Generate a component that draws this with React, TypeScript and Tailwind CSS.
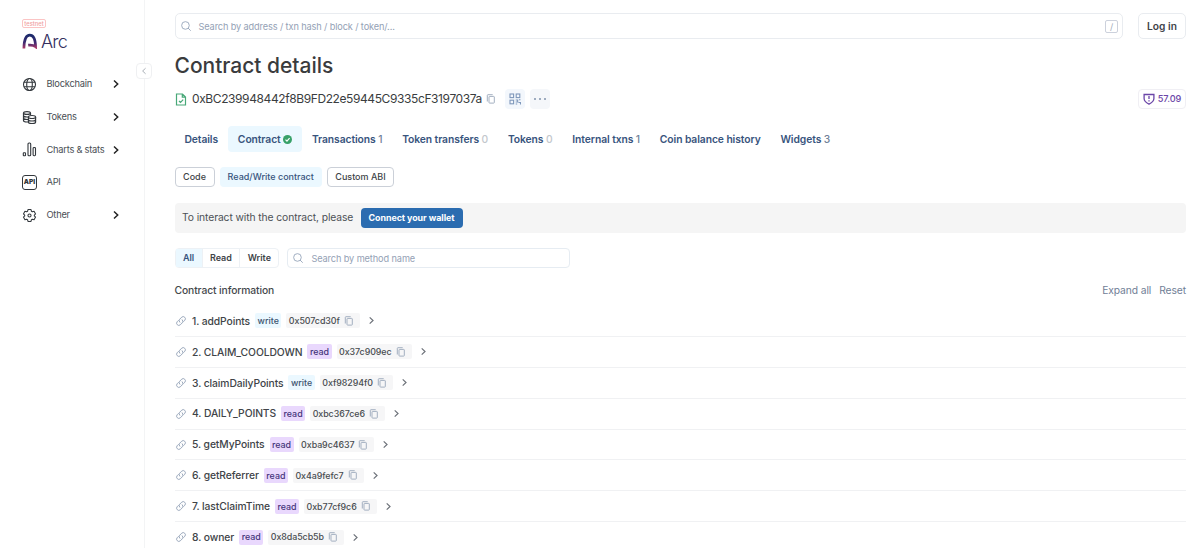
import React, { useState } from 'react';
import { clsx } from 'clsx';

type Method = { name: string; kind: 'read' | 'write'; selector: string };

const METHODS: Method[] = [
  { name: 'addPoints', kind: 'write', selector: '0x507cd30f' },
  { name: 'CLAIM_COOLDOWN', kind: 'read', selector: '0x37c909ec' },
  { name: 'claimDailyPoints', kind: 'write', selector: '0xf98294f0' },
  { name: 'DAILY_POINTS', kind: 'read', selector: '0xbc367ce6' },
  { name: 'getMyPoints', kind: 'read', selector: '0xba9c4637' },
  { name: 'getReferrer', kind: 'read', selector: '0x4a9fefc7' },
  { name: 'lastClaimTime', kind: 'read', selector: '0xb77cf9c6' },
  { name: 'owner', kind: 'read', selector: '0x8da5cb5b' },
];

const TABS: { label: string; count?: number; verified?: boolean }[] = [
  { label: 'Details' },
  { label: 'Contract', verified: true },
  { label: 'Transactions', count: 1 },
  { label: 'Token transfers', count: 0 },
  { label: 'Tokens', count: 0 },
  { label: 'Internal txns', count: 1 },
  { label: 'Coin balance history' },
  { label: 'Widgets', count: 3 },
];

const NAV = [
  { label: 'Blockchain', icon: GlobeIcon, more: true },
  { label: 'Tokens', icon: CoinsIcon, more: true },
  { label: 'Charts & stats', icon: StatsIcon, more: true },
  { label: 'API', icon: ApiIcon, more: false },
  { label: 'Other', icon: GearIcon, more: true },
];

function GlobeIcon() {
  return (
    <svg className="h-[15px] w-[15px]" viewBox="0 0 15 15" fill="none" stroke="currentColor" strokeWidth="1.1">
      <circle cx="7.5" cy="7.5" r="6" />
      <ellipse cx="7.5" cy="7.5" rx="2.8" ry="6" />
      <path d="M2 5.2h11M2 9.8h11" />
    </svg>
  );
}

function CoinsIcon() {
  return (
    <svg className="h-[15px] w-[15px]" viewBox="0 0 15 15" fill="none" stroke="currentColor" strokeWidth="1.2">
      <ellipse cx="5" cy="3" rx="3.5" ry="1.4" />
      <path d="M1.5 3v7.5c0 .8 1.5 1.500 3.500 1.500h1M8.500 3v2.300M1.500 5.600c0 .8 1.500 1.400 3.500 1.400h1M1.500 8.100c0 .8 1.500 1.400 3.500 1.400h1" />
      <ellipse cx="10" cy="7" rx="3.600" ry="1.500" />
      <path d="M6.400 7v4.900c0 .9 1.600 1.600 3.600 1.600s3.600-.7 3.600-1.600V7M6.400 9.400c0 .9 1.600 1.600 3.600 1.600s3.600-.7 3.600-1.600" />
    </svg>
  );
}

function StatsIcon() {
  return (
    <svg className="h-[15px] w-[15px]" viewBox="0 0 15 15" fill="none" stroke="currentColor" strokeWidth="1.1">
      <rect x="1.3" y="10.7" width="2.2" height="3" rx=".5" />
      <rect x="6" y="1" width="2.7" height="12.7" rx="1" />
      <rect x="11.1" y="5.5" width="2.4" height="8.2" rx=".9" />
    </svg>
  );
}

function ApiIcon() {
  return (
    <span className="flex h-[15px] w-[15px] items-center justify-center rounded-[3px] border border-current">
      <span className="text-[6.5px] leading-none font-black">API</span>
    </span>
  );
}

function GearIcon() {
  return (
    <svg className="h-[15px] w-[15px]" viewBox="0 0 24 24" fill="none" stroke="currentColor" strokeWidth="1.7" strokeLinejoin="round">
      <path d="M9.600 2.500h4.800l.7 2.700 1.500.9 2.700-.8 2.400 4.200-2 1.900v1.200l2 1.900-2.400 4.200-2.700-.8-1.500.9-.7 2.700H9.600l-.7-2.700-1.500-.9-2.700.8-2.400-4.200 2-1.900v-1.200l-2-1.900 2.400-4.200 2.700.8 1.500-.9z" />
      <circle cx="12" cy="12" r="2.500" />
    </svg>
  );
}

function Chevron({ className, width = 1.6 }: { className?: string; width?: number }) {
  return (
    <svg className={className} viewBox="0 0 10 10" fill="none" stroke="currentColor" strokeWidth={width}>
      <path d="M3 1.5 6.7 5 3 8.5" />
    </svg>
  );
}

function SearchIcon() {
  return (
    <svg className="h-[10px] w-[10px] shrink-0 text-[#97a6bb]" viewBox="0 0 11 11" fill="none" stroke="currentColor">
      <circle cx="4.9" cy="4.9" r="4.2" />
      <path d="m8 8 2.4 2.4" strokeLinecap="round" />
    </svg>
  );
}

function CopyIcon() {
  return (
    <svg className="h-[10px] w-[10px] shrink-0 text-[#a3afc0]" viewBox="0 0 10 10" fill="none" stroke="currentColor">
      <rect x="3" y="2.4" width="5.3" height="6.7" rx=".6" />
      <path d="M1.300 7.500V1.300c0-.3.200-.6.600-.6h4.800" />
    </svg>
  );
}

function LinkIcon() {
  return (
    <svg className="h-[12px] w-[12px] shrink-0 text-[#9aa8bc]" viewBox="0 0 24 24" fill="none" stroke="currentColor" strokeWidth="2" strokeLinecap="round">
      <path d="M9.500 14.500a4.400 4.400 0 0 1 0-6.200l4-4a4.400 4.400 0 0 1 6.200 6.200l-2.500 2.500" />
      <path d="M14.500 9.500a4.400 4.400 0 0 1 0 6.200l-4 4a4.400 4.400 0 0 1-6.200-6.200L6.800 11" />
    </svg>
  );
}

function Sidebar() {
  return (
    <aside className="relative w-[145px] shrink-0 border-r border-[#f3f4f5] pt-[19px] pl-[22px]">
      <div className="flex h-[9px] w-[24px] items-center justify-center rounded-[2px] border border-[#fbc4c4]">
        <span className="text-[5.8px] leading-none font-medium text-[#f0a0a0]">testnet</span>
      </div>
      <div className="mt-[4px] flex h-[18px] items-center gap-[3px]">
        <svg className="h-[16px] w-[16px]" viewBox="0 0 16 16" fill="none">
          <defs>
            <linearGradient id="arc" x1="0" y1="0" x2="0" y2="1">
              <stop offset="0" stopColor="#1b2a6b" />
              <stop offset=".55" stopColor="#3f2a72" />
              <stop offset="1" stopColor="#b03a68" />
            </linearGradient>
          </defs>
          <path d="M1.900 15.500C2 7.200 4.200 2.200 7.800 2.200c3.600 0 5.600 4.800 5.800 11.600-1.900-1.500-4.400-2-7.400-1.600" stroke="url(#arc)" strokeWidth="2.700" />
        </svg>
        <span className="pt-[2px] text-[18px] leading-none font-light tracking-[-0.8px] text-[#34305f]">Arc</span>
      </div>
      <nav className="mt-[18px] text-[#33383d]">
        {NAV.map(({ label, icon: Icon, more }) => (
          <a key={label} className="flex h-[32.7px] items-center">
            <Icon />
            <span className="ml-[9.5px] w-[64.5px] text-[9.3px] tracking-[-0.24px] whitespace-nowrap text-[#4a4f55]">{label}</span>
            {more && <Chevron className="h-[10px] w-[10px] text-[#222]" width={1.5} />}
          </a>
        ))}
      </nav>
      <button className="absolute top-[63px] -right-[8px] flex h-[16px] w-[16px] items-center justify-center rounded-[4px] border border-[#eff0f2] bg-white">
        <Chevron className="h-[8px] w-[8px] rotate-180 text-[#a5abb3]" width={1.2} />
      </button>
    </aside>
  );
}

function TopBar() {
  return (
    <div className="flex h-[26px] gap-[15px]">
      <div className="flex flex-1 items-center rounded-[5px] border border-[#e9ecf0] pr-[4px] pl-[5.5px]">
        <SearchIcon />
        <span className="ml-[7.5px] flex-1 pt-[1px] text-[9.2px] tracking-[-0.12px] text-[#94a1b5]">Search by address / txn hash / block / token/...</span>
        <span className="flex h-[13px] w-[13px] items-center justify-center rounded-[2px] border border-[#ccd1dc] text-[9px] leading-none text-[#a5adbb]">/</span>
      </div>
      <button className="w-[48px] rounded-[5px] border border-[#e9ecf0] pt-[1px] text-[10.2px] font-semibold text-[#3f4349]">Log in</button>
    </div>
  );
}

function AddressLine() {
  return (
    <div className="mt-[9px] flex h-[20px] items-center">
      <svg className="h-[13px] w-[12px] shrink-0" viewBox="0 0 12 13" fill="none" stroke="#48a878" strokeWidth="1.2">
        <path d="M1.500 1h6l3 3v8h-9zM7.300 1v3.200h3.200M4 8l1.500 1.500 2.700-2.800" />
      </svg>
      <span className="ml-[5.5px] w-[290px] text-[12px] tracking-[-0.4px] whitespace-nowrap text-[#3a3d40]">0xBC239948442f8B9FD22e59445C9335cF3197037a</span>
      <span className="ml-[4px]">
        <CopyIcon />
      </span>
      <button className="ml-[8.5px] flex h-[20px] w-[20px] items-center justify-center rounded-[4px] bg-[#f3f7fc]">
        <svg className="h-[12px] w-[12px]" viewBox="0 0 12 12" fill="none" stroke="#7f98bb" strokeWidth="1.1">
          <rect x="1" y="1" width="3.6" height="3.6" />
          <rect x="7.2" y="1" width="3.6" height="3.6" />
          <rect x="1" y="7.2" width="3.6" height="3.6" />
          <path d="M6.700 7h2v2h-2M10 6.700h1.500M9.500 9.500h2v2M6.700 11h1.500" />
        </svg>
      </button>
      <button className="ml-[5.5px] flex h-[20px] w-[20px] items-center justify-center gap-[2.5px] rounded-[4px] bg-[#f5f7fa]">
        <i className="h-[2.5px] w-[2.5px] rounded-full bg-[#8193ad]" />
        <i className="h-[2.5px] w-[2.5px] rounded-full bg-[#8193ad]" />
        <i className="h-[2.5px] w-[2.5px] rounded-full bg-[#8193ad]" />
      </button>
      <div className="ml-auto flex h-[20px] w-[48px] items-center justify-center gap-[3px] rounded-[4px] border border-[#f0eff4] text-[#6b46a8]">
        <svg className="h-[12px] w-[12px]" viewBox="0 0 12 12" fill="none" stroke="currentColor" strokeWidth="1.3">
          <path d="M1.100 1.500h9.800v4c0 2.800-2.200 4.300-4.900 5.600C3.300 9.800 1.100 8.300 1.100 5.500zM6 3v3M6 7.200v1.300" />
        </svg>
        <span className="text-[9.2px] font-medium tracking-[-0.15px]">57.09</span>
      </div>
    </div>
  );
}

function MethodRow({ method, index }: { method: Method; index: number }) {
  return (
    <div className="flex h-[30.9px] items-center border-b border-[#f0f1f3]">
      <LinkIcon />
      <span className="ml-[5.5px] pt-[1px] text-[10.3px] tracking-[-0.09px] font-medium text-[#404448]">
        {index + 1}. {method.name}
      </span>
      <span
        className={clsx(
          'ml-[5px] flex h-[15px] items-center rounded-[2px] px-[2.5px] text-[8.9px] font-medium',
          method.kind === 'read' ? 'bg-[#e9d8fd] text-[#44337a]' : 'bg-[#ebf8ff] text-[#3d5570]'
        )}
      >
        {method.kind}
      </span>
      <span className="ml-[5px] flex h-[15px] items-center rounded-[2px] bg-[#f6f6f7] pr-[6px] pl-[2.5px] text-[8.9px] tracking-[-0.07px] font-medium text-[#484c50]">
        {method.selector}
        <span className="ml-[4px]">
          <CopyIcon />
        </span>
      </span>
      <Chevron className="ml-[7px] h-[9px] w-[9px] text-[#6b7078]" width={1.3} />
    </div>
  );
}

export default function App() {
  const [filter, setFilter] = useState('All');

  return (
    <div className="flex h-[548px] overflow-hidden bg-white font-['Inter','Liberation_Sans',sans-serif]">
      <Sidebar />
      <main className="min-w-0 flex-1 pt-[13px] pr-[13px] pl-[29.5px]">
        <TopBar />
        <h1 className="mt-[12px] h-[29px] text-[21px] leading-[30px] font-medium tracking-[-0.02px] text-[#3a3b3d]">Contract details</h1>
        <AddressLine />

        <div className="mt-[17px] flex h-[26px] text-[10.3px] tracking-[-0.07px] font-semibold text-[#38547d]">
          {TABS.map(tab => (
            <button
              key={tab.label}
              className={clsx(
                'flex items-center rounded-[4px] px-[9.9px] pt-[1px] whitespace-nowrap',
                tab.verified && 'bg-[#ebf8ff]'
              )}
            >
              {tab.label}
              {tab.verified && (
                <svg className="ml-[2.5px] h-[9px] w-[9px]" viewBox="0 0 10 10">
                  <circle cx="5" cy="5" r="5" fill="#38a169" />
                  <path d="m2.800 5.200 1.600 1.600 2.900-3.300" fill="none" stroke="#fff" strokeWidth="1.3" />
                </svg>
              )}
              {tab.count !== undefined && (
                <span className={clsx('ml-[2.5px] font-medium', tab.count ? 'text-[#6f7f98]' : 'text-[#c3c7cc]')}>{tab.count}</span>
              )}
            </button>
          ))}
        </div>

        <div className="mt-[15px] flex h-[20px] gap-[5px] text-[9px] font-medium text-[#404448]">
          <button className="w-[40px] rounded-[4px] border border-[#cbd0d8]">Code</button>
          <button className="w-[102.5px] rounded-[4px] bg-[#ebf8ff] text-[#38547d]">Read/Write contract</button>
          <button className="w-[67px] rounded-[4px] border border-[#cbd0d8]">Custom ABI</button>
        </div>

        <div className="mt-[16px] flex h-[30px] items-center rounded-[4px] bg-[#f5f5f5] pl-[7.5px]">
          <span className="w-[178.5px] text-[10.3px] tracking-[-0.09px] whitespace-nowrap text-[#4d5156]">To interact with the contract, please</span>
          <button className="h-[20px] w-[102px] rounded-[4px] bg-[#2b6cb0] text-[8.9px] font-bold tracking-[-0.05px] text-white">Connect your wallet</button>
        </div>

        <div className="mt-[15px] flex h-[20px] gap-[8px]">
          <div className="flex rounded-[4px] border border-[#edf1f5] text-[9px] font-semibold">
            {['All', 'Read', 'Write'].map(item => (
              <button
                key={item}
                onClick={() => setFilter(item)}
                className={clsx(
                  'border-[#edf1f5] px-[7.4px] not-last:border-r',
                  filter === item ? 'bg-[#ebf8ff] text-[#38547d]' : 'text-[#404448]'
                )}
              >
                {item}
              </button>
            ))}
          </div>
          <div className="flex w-[283px] items-center rounded-[4px] border border-[#e6ecf2] pl-[5px]">
            <SearchIcon />
            <span className="ml-[8px] pt-[1px] text-[9.2px] tracking-[-0.1px] text-[#94a1b5]">Search by method name</span>
          </div>
        </div>

        <div className="mt-[15px] flex h-[16px] items-center text-[10.3px] tracking-[-0.1px]">
          <span className="font-medium text-[#44484c]">Contract information</span>
          <span className="ml-auto text-[#718096]">Expand all</span>
          <span className="ml-[8px] text-[#718096]">Reset</span>
        </div>

        <div className="mt-[7px]">
          {METHODS.map((method, i) => (
            <MethodRow key={method.selector} method={method} index={i} />
          ))}
        </div>
      </main>
    </div>
  );
}
